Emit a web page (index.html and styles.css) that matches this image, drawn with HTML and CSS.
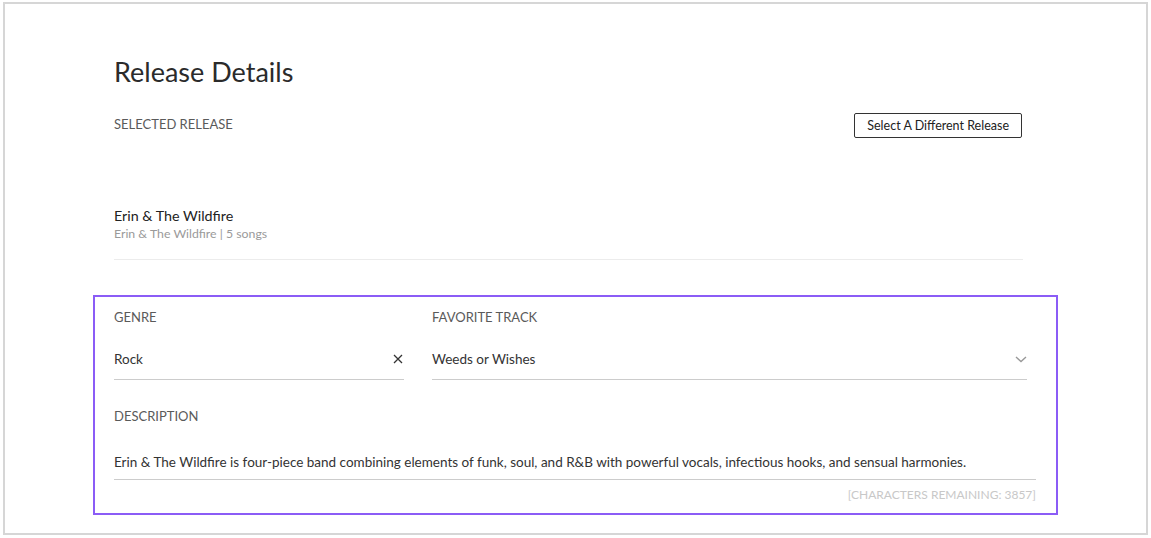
FILE: index.html
```html
<!DOCTYPE html>
<html lang="en">

<head>
    <meta charset="UTF-8">
    <meta name="viewport" content="width=device-width, initial-scale=1.0">
    <title>Release Details</title>
    <link rel="stylesheet" href="styles.css">
</head>

<body>
    <div class="frame">
        <div class="top">
            <h1>Release Details</h1>

            <div class="release_head">
                <span class="label">Selected Release</span>
                <button class="btn_outline">Select A Different Release</button>
            </div>

            <div class="release_info">
                <div class="release_name">Erin &amp; The Wildfire</div>
                <div class="release_meta">Erin &amp; The Wildfire | 5 songs</div>
            </div>
        </div>

        <div class="edit_box">
            <div class="field_row">
                <div class="field">
                    <span class="label">Genre</span>
                    <div class="input">
                        <span>Rock</span>
                        <svg class="icon_clear" width="10" height="10" viewBox="0 0 10 10">
                            <path d="M1 1L9 9M9 1L1 9" stroke="#333" stroke-width="1.3" fill="none" />
                        </svg>
                    </div>
                </div>
                <div class="field">
                    <span class="label">Favorite Track</span>
                    <div class="input">
                        <span>Weeds or Wishes</span>
                        <svg class="icon_chevron" width="12" height="7" viewBox="0 0 12 7">
                            <path d="M1 1L6 5.5L11 1" stroke="#999" stroke-width="1.4" fill="none" />
                        </svg>
                    </div>
                </div>
            </div>

            <div class="field desc_field">
                <span class="label">Description</span>
                <div class="input desc_input">Erin &amp; The Wildfire is four-piece band combining elements of funk, soul, and R&amp;B with powerful vocals, infectious hooks, and sensual harmonies.</div>
                <div class="counter">[Characters Remaining: 3857]</div>
            </div>
        </div>
    </div>
</body>

</html>
```

FILE: styles.css
```css
* {
    margin: 0;
    padding: 0;
    box-sizing: border-box;
}

body {
    background-color: #fff;
    font-family: Lato, "Noto Sans", sans-serif;
    color: #333;
}

.frame {
    margin: 2px 3px 0;
    height: 533px;
    border: 2px solid #d6d6d6;
}

.top {
    padding: 0 123px 0 109px;
}

.top h1 {
    margin-top: 50px;
    font-size: 27px;
    line-height: 36px;
    font-weight: 400;
    color: #2b2b2b;
}

.label {
    display: block;
    font-size: 13px;
    line-height: 16px;
    text-transform: uppercase;
    color: #5a5a5a;
}

.release_head {
    display: flex;
    justify-content: space-between;
    align-items: flex-start;
    margin-top: 23px;
}

.release_head .label {
    margin-top: 3px;
}

.btn_outline {
    font-family: Lato, "Noto Sans", sans-serif;
    font-size: 12.5px;
    line-height: 23px;
    padding: 0 12px;
    border: 1px solid #333;
    border-radius: 2px;
    background: #fff;
    color: #222;
    margin-right: 1px;
}

.release_info {
    margin-top: 68px;
    padding-bottom: 17px;
    border-bottom: 1px solid #ececec;
}

.release_name {
    font-size: 14.3px;
    line-height: 20px;
    color: #222;
}

.release_meta {
    font-size: 12.3px;
    line-height: 16px;
    color: #9a9a9a;
}

/* editable part */
.edit_box {
    margin: 35px 88px 0;
    border: 2px solid #8b5cf6;
    padding: 12px 20px 10px 19px;
}

.field_row {
    display: grid;
    grid-template-columns: 290px 1fr;
    column-gap: 28px;
    margin-right: 9px;
}

.input {
    display: flex;
    justify-content: space-between;
    align-items: center;
    margin-top: 24px;
    padding-bottom: 10px;
    border-bottom: 1px solid #ccc;
    font-size: 13.5px;
    line-height: 20px;
    color: #333;
}

.icon_clear {
    margin-right: 1px;
}

.icon_chevron {
    margin-right: 0;
}

.desc_field {
    margin-top: 28px;
}

.desc_input {
    margin-top: 28px;
    padding-bottom: 7px;
}

.counter {
    margin-top: 7px;
    font-size: 12px;
    line-height: 16px;
    text-align: right;
    text-transform: uppercase;
    color: #c8c8c8;
}
```
